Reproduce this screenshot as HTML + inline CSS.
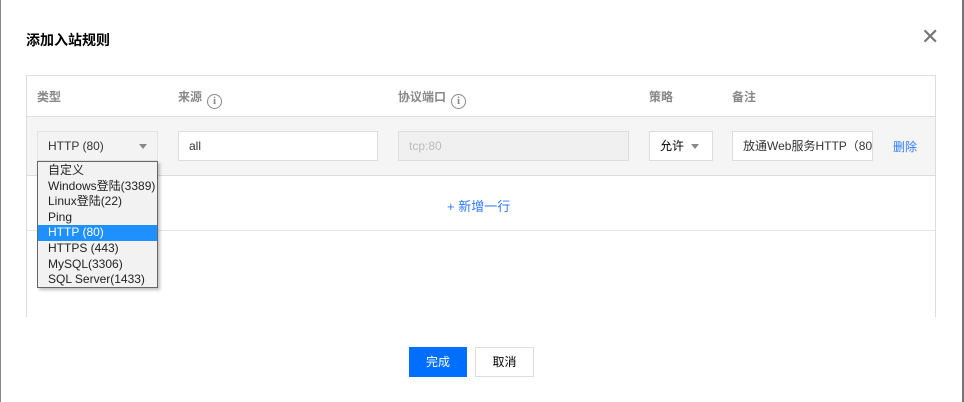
<!DOCTYPE html>
<html><head><meta charset="utf-8"><style>
*{box-sizing:border-box;margin:0;padding:0}
body{width:964px;height:402px;background:#fff;font-family:"Liberation Sans","Noto Sans CJK SC",sans-serif;font-size:12px;color:#333;position:relative;overflow:hidden}
.a{position:absolute}
.inp{position:absolute;border:1px solid #ddd;background:#fff;height:30px;line-height:28px;padding-left:10px;font-size:12px;color:#333}
.hd{position:absolute;top:88px;color:#888;font-size:12px;font-weight:bold}
.info{display:inline-block;width:15px;height:15px;border:1.5px solid #888;border-radius:50%;font-size:11px;line-height:12px;text-align:center;vertical-align:-3px;margin-left:5px;font-weight:bold;font-family:"Liberation Serif",serif;color:#888}
.tri{position:absolute;width:0;height:0;border-left:4px solid transparent;border-right:4px solid transparent;border-top:5px solid #888}
.dd div{height:15.6px;line-height:15.6px;padding-left:10px;font-size:12px;color:#222;white-space:nowrap}
</style></head><body>
<div class="a" style="left:0;top:0;width:1px;height:402px;background:#888"></div>
<div class="a" style="left:962px;top:0;width:2px;height:402px;background:#777"></div>
<div class="a" style="left:26px;top:30px;font-size:14px;font-weight:bold;color:#000">添加入站规则</div>
<div class="a" style="left:921px;top:24px;font-size:22px;color:#777;line-height:26px">✕</div>
<div class="a" style="left:26px;top:75px;width:910px;height:242px;border:1px solid #ddd;border-bottom:none"></div>
<div class="a" style="left:27px;top:116px;width:908px;height:60px;background:#f5f5f5;border-top:1px solid #ddd;border-bottom:1px solid #ddd"></div>
<div class="a" style="left:27px;top:230px;width:908px;height:1px;background:#e5e5e5"></div>
<div class="hd" style="left:37px">类型</div>
<div class="hd" style="left:178px">来源<span class="info">i</span></div>
<div class="hd" style="left:398px">协议端口<span class="info">i</span></div>
<div class="hd" style="left:649px">策略</div>
<div class="hd" style="left:732px">备注</div>
<div class="inp" style="left:37px;top:131px;width:121px;background:#f3f3f3;border-color:#e3e3e3">HTTP (80)</div>
<div class="tri" style="left:139px;top:144px"></div>
<div class="inp" style="left:178px;top:131px;width:200px">all</div>
<div class="inp" style="left:398px;top:131px;width:231px;background:#f0f0f0;color:#bbb">tcp:80</div>
<div class="inp" style="left:649px;top:131px;width:64px;color:#000">允许</div>
<div class="tri" style="left:691px;top:144px"></div>
<div class="inp" style="left:732px;top:131px;width:141px;overflow:hidden;white-space:nowrap">放通Web服务HTTP（80）</div>
<div class="a" style="left:893px;top:138px;color:#2f7bff">删除</div>
<div class="a" style="left:447px;top:196px;color:#2f7bff;font-size:13px">+ 新增一行</div>
<div class="a dd" style="left:37px;top:161px;width:121px;height:127px;background:#f2f2f2;border:1px solid #666;box-shadow:2px 2px 3px rgba(0,0,0,.25);padding-top:1px">
<div>自定义</div><div>Windows登陆(3389)</div><div>Linux登陆(22)</div><div>Ping</div>
<div style="background:#1e90ff;color:#fff">HTTP (80)</div><div>HTTPS (443)</div><div>MySQL(3306)</div><div>SQL Server(1433)</div></div>
<div class="a" style="left:409px;top:347px;width:58px;height:30px;background:#006eff;color:#fff;text-align:center;line-height:30px">完成</div>
<div class="a" style="left:475px;top:347px;width:59px;height:30px;border:1px solid #ddd;color:#000;text-align:center;line-height:28px">取消</div>
</body></html>
